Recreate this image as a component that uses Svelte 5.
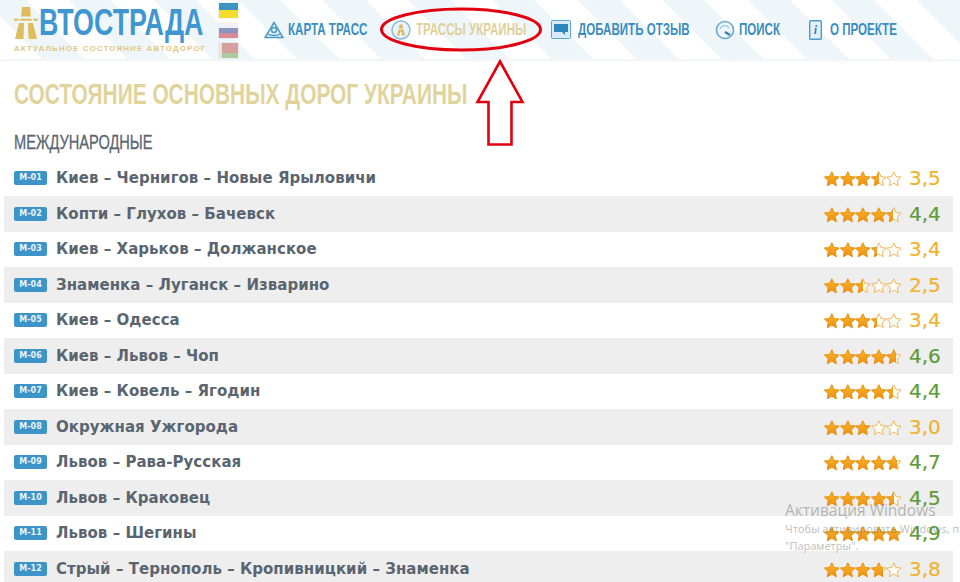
<script>
  const nav = [
    { label: 'КАРТА ТРАСС', icon: 'map' },
    { label: 'ТРАССЫ УКРАИНЫ', icon: 'pin', active: true },
    { label: 'ДОБАВИТЬ ОТЗЫВ', icon: 'chat' },
    { label: 'ПОИСК', icon: 'search' },
    { label: 'О ПРОЕКТЕ', icon: 'info' }
  ];

  const roads = [
    ['М-01', 'Киев – Чернигов – Новые Ярыловичи', 3.5],
    ['М-02', 'Копти – Глухов – Бачевск', 4.4],
    ['М-03', 'Киев – Харьков – Должанское', 3.4],
    ['М-04', 'Знаменка – Луганск – Изварино', 2.5],
    ['М-05', 'Киев – Одесса', 3.4],
    ['М-06', 'Киев – Львов – Чоп', 4.6],
    ['М-07', 'Киев – Ковель – Ягодин', 4.4],
    ['М-08', 'Окружная Ужгорода', 3.0],
    ['М-09', 'Львов – Рава-Русская', 4.7],
    ['М-10', 'Львов – Краковец', 4.5],
    ['М-11', 'Львов – Шегины', 4.9],
    ['М-12', 'Стрый – Тернополь – Кропивницкий – Знаменка', 3.8]
  ];

  const starPath = 'M7.8 .8l2.2 4.7 5.1.6-3.8 3.5 1 5.1-4.5-2.6-4.5 2.6 1-5.1L.5 6.1l5.1-.6z';
</script>

<div class="page">
  <header class="top">
    <div class="logo">
      <div class="wordmark">
        <svg class="road-a" width="24" height="32" viewBox="0 0 24 30" preserveAspectRatio="none">
          <path fill="#e0bd5c" d="M8 0h8l1 9H7zM6.500 11h11l.5 2H6zM5 15h5l-.5 15H1zM14 15h5l4 15h-8.500zM0 11h5l-.5 2H0zM19 11h5v2h-4.500z" />
        </svg>
        <span class="word">ВТОСТРАДА</span>
      </div>
      <div class="slogan">АКТУАЛЬНОЕ СОСТОЯНИЕ АВТОДОРОГ</div>
    </div>

    <div class="flags">
      <span class="flag ua"></span>
      <span class="flag ru"></span>
      <span class="flag by"></span>
    </div>

    <nav>
      {#each nav as item}
        <a class="link {item.icon}" class:active={item.active} href="#top">
          {#if item.icon === 'map'}
            <svg width="20" height="18" viewBox="0 0 20 18" fill="none" stroke="#4a9bc9" stroke-width="1.500">
              <path d="M10 1.500L19 16.500H1z" fill="#e3f1f9" />
              <circle cx="10" cy="9" r="2.500" />
              <path d="M4 13c3 2 9 2 12 0" />
            </svg>
          {:else if item.icon === 'pin'}
            <svg width="20" height="20" viewBox="0 0 20 20">
              <circle cx="10" cy="10" r="9" fill="#e8f2f8" stroke="#8dbbd8" stroke-width="1.500" />
              <path fill="#dcb95e" d="M8.500 4.500h3l.5 4h-4zM7.500 9.500h5l1.500 6h-3l-.5-4h-1.500l-.5 4H6z" />
            </svg>
          {:else if item.icon === 'chat'}
            <svg width="20" height="19" viewBox="0 0 20 19">
              <rect x=".5" y=".5" width="19" height="18" rx="1" fill="#d8ebf6" stroke="#5ba7d2" />
              <path fill="#2f86ba" d="M3 4h14v8h-3v3l-3-3H3z" />
            </svg>
          {:else if item.icon === 'search'}
            <svg width="20" height="20" viewBox="0 0 20 20" fill="none">
              <circle cx="10" cy="10" r="8.500" fill="#eef6fb" stroke="#6aa9d0" stroke-width="1.600" />
              <path d="M10 12l5 3" stroke="#3b7ea8" stroke-width="2.400" />
              <path d="M5 9a5 5 0 0 1 9-1" stroke="#a6cde4" stroke-width="1.500" />
            </svg>
          {:else}
            <svg width="13" height="20" viewBox="0 0 13 20">
              <rect x=".7" y=".7" width="11.600" height="18.600" rx="1" fill="#e4f1f9" stroke="#4a9bc9" stroke-width="1.400" />
              <text x="6.500" y="14" text-anchor="middle" class="info-i">i</text>
            </svg>
          {/if}
          <span class="label">{item.label}</span>
        </a>
      {/each}
    </nav>
  </header>

  <main>
    <h1><span>СОСТОЯНИЕ ОСНОВНЫХ ДОРОГ УКРАИНЫ</span></h1>
    <h2><span>МЕЖДУНАРОДНЫЕ</span></h2>

    <ul class="roads">
      {#each roads as [code, name, rate]}
        <li class="road">
          <span class="tag">{code}</span>
          <span class="name">{name}</span>
          <span class="stars">
            <span class="star-row empty">
              {#each Array(5) as _}
                <svg width="15.600" height="16" viewBox="0 0 15.600 16"><path d={starPath} fill="#fffdf8" stroke="#eeb65c" stroke-width="1" /></svg>
              {/each}
            </span>
            <span class="star-row full" style="width: {rate * 15.6}px">
              {#each Array(5) as _}
                <svg width="15.600" height="16" viewBox="0 0 15.600 16"><path d={starPath} fill="url(#star-fill)" stroke="#e58e10" stroke-width=".8" /></svg>
              {/each}
            </span>
          </span>
          <span class="rate" class:good={rate >= 4}>{rate.toFixed(1).replace('.', ',')}</span>
        </li>
      {/each}
    </ul>
  </main>

  <svg class="marks" width="960" height="582" viewBox="0 0 960 582" fill="none" stroke="#e2000f">
    <defs>
      <linearGradient id="star-fill" x1="0" y1="0" x2="0" y2="1">
        <stop offset="0" stop-color="#fbb62c" />
        <stop offset="1" stop-color="#ee8f10" />
      </linearGradient>
    </defs>
    <ellipse cx="461" cy="29.500" rx="79.500" ry="20.500" stroke-width="3" />
    <path d="M500 61.500L477.500 102H488.500V144.500H511.500V102H522.500z" stroke-width="2.600" />
  </svg>

  <div class="activation">
    <div class="act-title">Активация Windows</div>
    <div class="act-text">Чтобы активировать Windows, пе<br />"Параметры".</div>
  </div>
</div>

<style>
  :global(body) {
    margin: 0;
    background: #fff;
  }

  .page {
    position: relative;
    height: 582px;
    overflow: hidden;
    font-family: "DejaVu Sans", sans-serif;
  }

  .top {
    display: flex;
    align-items: center;
    height: 60px;
    box-sizing: border-box;
    padding-left: 14px;
    background: repeating-linear-gradient(45deg, #fff 0 30px, #eff6fa 30px 60px);
    border-bottom: 1px solid #f2f4f6;
    box-shadow: 0 1px 2px #f0f2f4;
  }

  .logo {
    width: 192px;
    flex: none;
    margin-top: 1px;
  }

  .wordmark {
    display: flex;
    align-items: flex-end;
    height: 32px;
  }

  .road-a {
    margin-bottom: 0;
    flex: none;
  }

  .word {
    display: inline-block;
    margin-left: 1px;
    font-family: "Liberation Sans", sans-serif;
    font-weight: 700;
    font-size: 37px;
    line-height: 32px;
    color: #3f96d0;
    transform: scaleX(.725);
    transform-origin: left;
  }

  .slogan {
    margin-top: 5px;
    font-family: "Liberation Sans", sans-serif;
    font-weight: 700;
    font-size: 8px;
    line-height: 10px;
    letter-spacing: 1.080px;
    white-space: nowrap;
    color: #dfc884;
  }

  .flags {
    display: flex;
    flex: none;
    flex-direction: column;
    gap: 5px;
    margin: 1px 0 0 13px;
  }

  .flag {
    display: block;
    width: 19px;
    height: 15px;
    box-shadow: 0 0 1px #b8bcc0;
  }

  .ua { background: linear-gradient(#3d94c4 0 50%, #f5dd2e 50%); }
  .ru { background: linear-gradient(#f2f2f5 0 33%, #8b94c0 33% 66%, #d98a94 66%); }
  .by { background: linear-gradient(90deg, #eee3dc 0 3px, transparent 3px), linear-gradient(#d5a09c 0 66%, #aecb9f 66%); }

  nav {
    display: flex;
    align-items: center;
    margin-left: 26px;
  }

  .link {
    display: flex;
    flex: none;
    align-items: center;
    font-size: 17px;
    color: #3a8dbe;
    text-decoration: none;
    white-space: nowrap;
  }

  .label {
    display: inline-block;
    margin-left: 4px;
    font-family: "Liberation Sans", sans-serif;
    font-weight: 700;
    transform: scaleX(.68);
    transform-origin: left;
  }

  .map .label { width: 78px; }
  .pin .label { width: 109px; margin-left: 5px; }
  .chat .label { width: 112px; margin-left: 7px; }
  .search .label { width: 42px; margin-left: 4px; }
  .info .label { width: 67px; margin-left: 8px; }

  .link.pin { margin-left: 25px; }
  .link.pin .label { color: #dfd09a; }
  .link.chat { margin-left: 26px; }
  .link.search { margin-left: 25px; }
  .link.info { margin-left: 28px; }

  .info-i {
    font: italic 700 12px "Liberation Serif", serif;
    fill: #2f7fb0;
    stroke: none;
  }

  main {
    padding: 0 7px 0 4px;
  }

  h1, h2 {
    margin-left: 10px;
    font-family: "Liberation Sans", sans-serif;
    white-space: nowrap;
  }

  h1 span, h2 span {
    display: inline-block;
    transform-origin: left;
  }

  h1 {
    margin-top: 17px;
    margin-bottom: 0;
    font-weight: 700;
    font-size: 29px;
    line-height: 34px;
    color: #e0d49c;
  }

  h1 span { transform: scaleX(.72); }

  h2 {
    margin-top: 19px;
    margin-bottom: 0;
    font-weight: 400;
    font-size: 20px;
    line-height: 24px;
    color: #5a6570;
    -webkit-text-stroke: .3px #5a6570;
  }

  h2 span { transform: scaleX(.73); }

  .roads {
    margin: 6.500px 0 0;
    padding: 0;
    list-style: none;
  }

  .road {
    position: relative;
    display: flex;
    align-items: center;
    height: 35.500px;
    padding-left: 10px;
  }

  .road:nth-child(even) {
    background: #eeeeee;
  }

  .tag {
    flex: none;
    width: 33px;
    height: 14px;
    margin-right: 9px;
    border-radius: 2px;
    background: #3c94c8;
    color: #e8f3fa;
    font-size: 8px;
    font-weight: 700;
    line-height: 14px;
    text-align: center;
  }

  .name {
    flex: 1;
    font-size: 15px;
    font-weight: 700;
    letter-spacing: .03px;
    color: #5a6570;
    white-space: nowrap;
  }

  .stars {
    position: relative;
    flex: none;
    width: 78px;
    height: 16px;
    margin-right: 7px;
  }

  .star-row {
    position: absolute;
    top: 1px;
    left: 0;
    display: flex;
    height: 16px;
    overflow: hidden;
  }

  .star-row svg {
    flex: none;
  }

  .empty {
    width: 78px;
  }

  .rate {
    flex: none;
    width: 44px;
    font-size: 20px;
    line-height: 24px;
    color: #f0b32e;
    -webkit-text-stroke: .2px #f0b32e;
  }

  .rate.good {
    color: #5e9c38;
    -webkit-text-stroke: .2px #5e9c38;
  }

  .marks {
    position: absolute;
    top: 0;
    left: 0;
    pointer-events: none;
  }

  .activation {
    position: absolute;
    top: 501px;
    left: 785px;
    width: 175px;
    overflow: hidden;
    font-family: "Open Sans", "Noto Sans", sans-serif;
    color: rgba(120, 120, 120, .5);
    pointer-events: none;
    white-space: nowrap;
  }

  .act-title {
    font-size: 15.500px;
    line-height: 19px;
  }

  .act-text {
    font-size: 11px;
    line-height: 17px;
  }
</style>
